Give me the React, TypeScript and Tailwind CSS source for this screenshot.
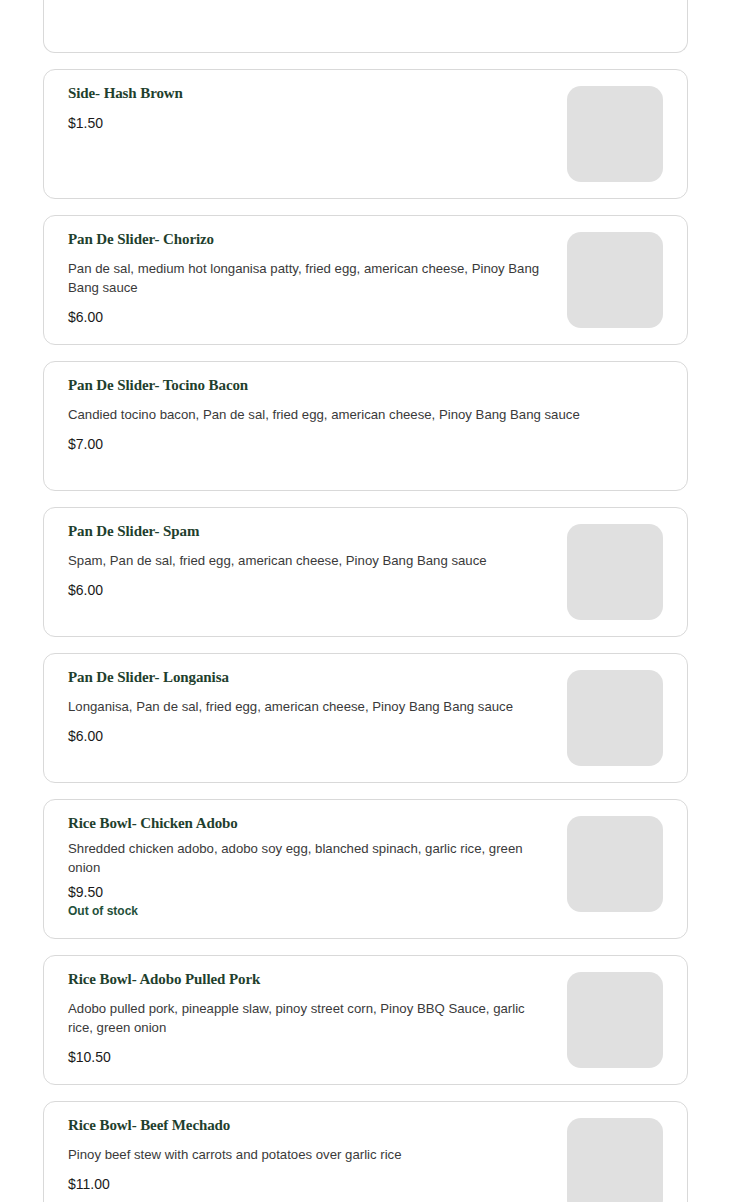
import { JSX } from "react";

type Item = {
  name: string;
  desc?: string;
  price: string;
  image?: boolean;
  outOfStock?: boolean;
};

const items: Item[] = [
  { name: "Side- Hash Brown", price: "$1.50", image: true },
  {
    name: "Pan De Slider- Chorizo",
    desc: "Pan de sal, medium hot longanisa patty, fried egg, american cheese, Pinoy Bang Bang sauce",
    price: "$6.00",
    image: true,
  },
  {
    name: "Pan De Slider- Tocino Bacon",
    desc: "Candied tocino bacon, Pan de sal, fried egg, american cheese, Pinoy Bang Bang sauce",
    price: "$7.00",
  },
  {
    name: "Pan De Slider- Spam",
    desc: "Spam, Pan de sal, fried egg, american cheese, Pinoy Bang Bang sauce",
    price: "$6.00",
    image: true,
  },
  {
    name: "Pan De Slider- Longanisa",
    desc: "Longanisa, Pan de sal, fried egg, american cheese, Pinoy Bang Bang sauce",
    price: "$6.00",
    image: true,
  },
  {
    name: "Rice Bowl- Chicken Adobo",
    desc: "Shredded chicken adobo, adobo soy egg, blanched spinach, garlic rice, green onion",
    price: "$9.50",
    image: true,
    outOfStock: true,
  },
  {
    name: "Rice Bowl- Adobo Pulled Pork",
    desc: "Adobo pulled pork, pineapple slaw, pinoy street corn, Pinoy BBQ Sauce, garlic rice, green onion",
    price: "$10.50",
    image: true,
  },
  {
    name: "Rice Bowl- Beef Mechado",
    desc: "Pinoy beef stew with carrots and potatoes over garlic rice",
    price: "$11.00",
    image: true,
  },
];

function MenuCard({ item }: { item: Item }): JSX.Element {
  const tight = item.outOfStock;
  return (
    <div className="flex gap-4 min-h-[130px] rounded-xl border border-[#d9d9d9] bg-white px-6 py-4">
      <div className="flex-1 flex flex-col">
        <h3 className="text-[15px] leading-[14px] font-bold text-[#1f3f2e] [font-family:'Liberation_Serif',serif] tracking-[-0.1px]">
          {item.name}
        </h3>
        {item.desc && (
          <p
            className={
              (tight ? "mt-[9px] " : "mt-[13px] ") +
              "text-[13.2px] leading-[19px] text-[#3a3a3a] [font-family:'Liberation_Sans',sans-serif]"
            }
          >
            {item.desc}
          </p>
        )}
        <p
          className={
            (tight ? "mt-[5px] " : item.desc ? "mt-[10px] " : "mt-[13px] ") +
            "text-[14px] leading-5 text-[#1a1a1a] [font-family:'Liberation_Sans',sans-serif]"
          }
        >
          {item.price}
        </p>
        {item.outOfStock && (
          <p className="mb-[2px] text-[12px] leading-[18px] font-bold text-[#24503a] [font-family:'Liberation_Sans',sans-serif]">
            Out of stock
          </p>
        )}
      </div>
      {item.image && <div className="w-24 h-24 shrink-0 rounded-[14px] bg-[#e0e0e0]" />}
    </div>
  );
}

export default function App(): JSX.Element {
  return (
    <main className="min-h-screen bg-white pl-[43px] pr-[42px] pb-10">
      <div className="flex flex-col gap-4">
        <div className="h-[53px] rounded-b-xl border border-t-0 border-[#d9d9d9] bg-white" />
        {items.map((item) => (
          <MenuCard key={item.name} item={item} />
        ))}
      </div>
    </main>
  );
}
